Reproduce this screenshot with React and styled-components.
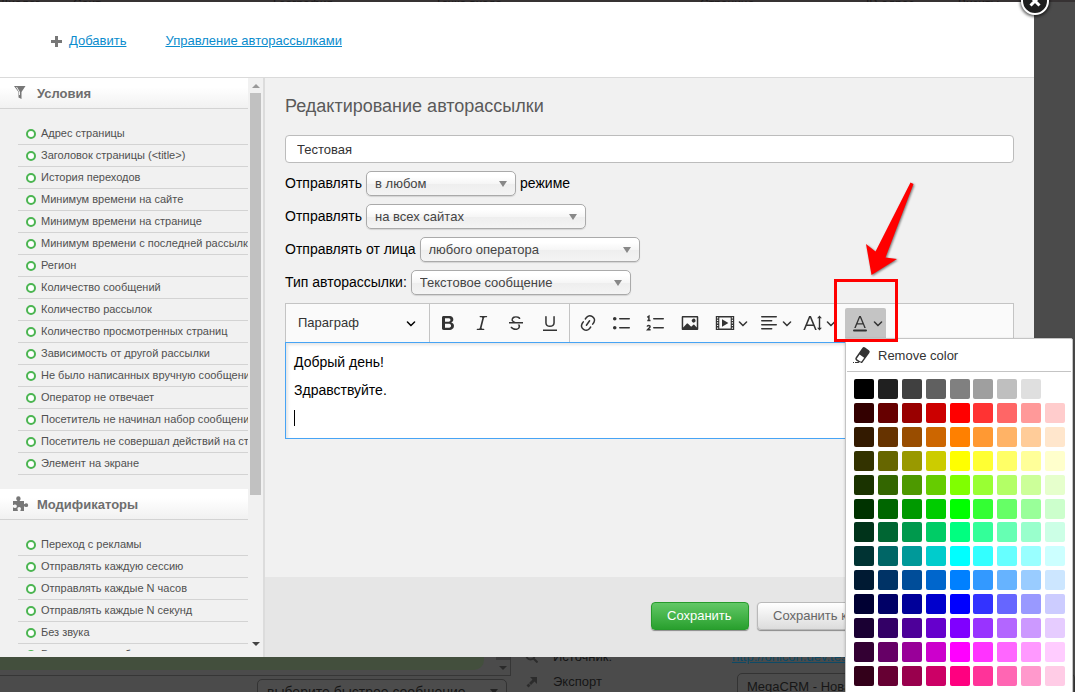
import React from "react";
import styled, { createGlobalStyle } from "styled-components";

const GlobalStyle = createGlobalStyle`
  *, *::before, *::after { box-sizing: border-box; }
  body {
    margin: 0;
    background: #4b4b4b;
    font-family: "Liberation Sans", Arial, sans-serif;
    font-size: 13px;
    color: #000;
    overflow: hidden;
  }
  button, input, select { font-family: inherit; margin: 0; }
`;

/* ---------- page behind the dialog ---------- */

const Page = styled.div`
  height: 100vh;
  display: flex;
  flex-direction: column;
  overflow: hidden;
`;

const TableHead = styled.div`
  height: 2px;
  flex: none;
  display: grid;
  grid-template-columns: 73px 200px 162px 265px 166px 92px 1fr;
  align-items: end;
  overflow: hidden;
  background: #363233;
  color: #1c1a1b;
  font-size: 12px;
  line-height: 8px;
`;

const Behind = styled.div`
  height: 35px;
  flex: none;
  display: flex;
  overflow: hidden;
  color: #161616;
`;

const Chat = styled.div`
  width: 511px;
  flex: none;
`;

const ChatLog = styled.div`
  height: 19px;
  display: flex;
  justify-content: space-between;
  border: solid #363636;
  border-width: 0 1px 1px 0;
`;

const ChatBubble = styled.div`
  width: 484px;
  height: 13px;
  background: #434f3d;
  border-radius: 0 0 10px 0;
`;

const ChatScroll = styled.div`
  width: 14px;
  border-top: 3px solid #3b3b3b;
  display: flex;
  align-items: center;
  justify-content: center;
`;

const QuickWrap = styled.div`
  position: relative;
  padding: 3px 4px 0 257px;
`;

const QuickArrow = styled.span`
  position: absolute;
  top: 13px;
  right: 13px;
  border: 4px solid transparent;
  border-top: 5px solid #222;
  border-bottom: 0;
  pointer-events: none;
`;

const Details = styled.div`
  width: 207px;
  flex: none;
  padding-left: 14px;
  margin-top: -13px;
`;

const DetailRow = styled.div`
  height: 25px;
  display: flex;
  align-items: center;
  gap: 15px;
`;

const Crm = styled.div`
  flex: 1;
  padding-left: 14px;
  margin-top: -8px;
`;

const CrmLink = styled.a`
  display: block;
  line-height: 16px;
  color: #0d4a66;
`;

const DimSelect = styled.select`
  appearance: none;
  display: block;
  width: 100%;
  height: 26px;
  padding: 0 12px 0 9px;
  border: 1px solid #333;
  border-radius: 5px;
  background: #4c4c4c;
  color: #161616;
  font-size: ${(p) => p.$size || 14}px;
`;

const CrmBox = styled.div`
  margin: 8px 0 0 5px;
`;

const Triangle = styled.span`
  width: 0;
  height: 0;
  border: 4px solid transparent;
  border-width: ${(p) => (p.$up ? "0 4px 4px" : "4px 4px 0")};
  border-bottom-color: ${(p) => (p.$up ? p.$color : "transparent")};
  border-top-color: ${(p) => (p.$up ? "transparent" : p.$color)};
`;

/* ---------- dialog ---------- */

const Dialog = styled.div`
  flex: 1;
  min-height: 0;
  margin-right: 41px;
  position: relative;
  display: flex;
  flex-direction: column;
  background: #fff;
`;

const CloseButton = styled.button`
  position: absolute;
  top: -15px;
  right: -15px;
  width: 28px;
  height: 28px;
  padding: 0;
  display: flex;
  align-items: center;
  justify-content: center;
  border: 2px solid #fff;
  border-radius: 50%;
  background: #1d1d1d;
  box-shadow: 0 1px 3px 1px rgba(0, 0, 0, 0.6);
`;

const DialogHeader = styled.header`
  height: 76px;
  flex: none;
  display: flex;
  align-items: center;
  gap: 39px;
  padding: 3px 51px 0;
  border-bottom: 1px solid #dadada;
`;

const HeaderLink = styled.a`
  display: flex;
  align-items: center;
  gap: 7px;
  color: #0a8ccd;
  line-height: 16px;
`;

const DialogBody = styled.div`
  flex: 1;
  min-height: 0;
  display: flex;
`;

const Sidebar = styled.aside`
  width: 265px;
  flex: none;
  display: flex;
  padding-bottom: 6px;
  background: #f1f1f1;
  border-right: 2px solid #dcdcdc;
`;

const SidebarScroll = styled.div`
  flex: 1;
  min-width: 0;
  overflow: hidden;
`;

const ScrollTrack = styled.div`
  width: 15px;
  display: flex;
  flex-direction: column;
  align-items: center;
`;

const ScrollArrow = styled.button`
  width: 15px;
  height: 15px;
  padding: 0;
  border: 0;
  background: none;
  display: flex;
  align-items: center;
  justify-content: center;
`;

const ScrollRail = styled.div`
  flex: 1;
  align-self: stretch;
  padding: 0 2px;
`;

const ScrollThumb = styled.div`
  height: 74%;
  background: #c1c1c1;
`;

const SectionTitle = styled.h2`
  height: 31px;
  margin: 0;
  display: flex;
  align-items: center;
  gap: 8px;
  padding-left: 12px;
  border-bottom: 1px solid #d3d3d3;
  background: linear-gradient(#fff 30%, #f1f1f1);
  color: #6e6e6e;
  font-size: 13px;
  font-weight: bold;
`;

const ConditionList = styled.ul`
  margin: 0;
  padding: 14px 0 14px 18px;
  list-style: none;
`;

const Condition = styled.li`
  height: 22px;
  display: flex;
  align-items: flex-start;
  gap: 5px;
  padding-left: 8px;
  border-bottom: 1px solid #d3d3d3;
  color: #505050;
  font-size: 11px;
  line-height: 20px;
  white-space: nowrap;

  &::before {
    content: "";
    width: 10px;
    height: 10px;
    margin-top: 6px;
    flex: none;
    border: 2px solid #4bb551;
    border-radius: 50%;
    background: #fff;
  }
`;

const Main = styled.main`
  flex: 1;
  min-width: 0;
  display: flex;
  flex-direction: column;
  background: #f1f1f1;
`;

const Form = styled.form`
  flex: 1;
  padding: 17px 20px 0;
  display: flex;
  flex-direction: column;
  gap: 8px;
`;

const Title = styled.h1`
  margin: 0 0 10px;
  color: #5a5a5a;
  font-size: 18px;
  line-height: 22px;
  font-weight: normal;
`;

const NameInput = styled.input`
  width: 100%;
  height: 28px;
  padding: 0 11px;
  border: 1px solid #bcbcbc;
  border-radius: 4px;
  background: #fff;
  color: #333;
  font-size: 13px;
`;

const FieldRow = styled.div`
  height: 25px;
  display: flex;
  align-items: flex-start;
  gap: 4px;
  font-size: 14px;
  line-height: 24px;
`;

const SelectWrap = styled.span`
  position: relative;
  width: ${(p) => p.$width}px;

  &::after {
    content: "";
    position: absolute;
    top: 10px;
    right: 9px;
    border: 4px solid transparent;
    border-top: 6px solid #888;
    border-bottom: 0;
    pointer-events: none;
  }
`;

const Select = styled.select`
  appearance: none;
  display: block;
  width: 100%;
  height: 25px;
  padding: 0 24px 0 8px;
  border: 1px solid #aaa;
  border-radius: 5px;
  background: linear-gradient(#fff 20%, #f6f6f6 50%, #eee 52%, #f4f4f4);
  box-shadow: 0 1px 1px rgba(0, 0, 0, 0.12);
  color: #444;
  font-size: 13px;
`;

const Editor = styled.div``;

const Toolbar = styled.div`
  height: 39px;
  display: flex;
  border: 1px solid #c4c4c4;
  border-bottom: 0;
  background: #fafafa;
`;

const ToolGroup = styled.div`
  display: flex;
  align-items: center;
  padding: 0 2px 0 1px;
  border-right: ${(p) => (p.$last ? 0 : 1)}px solid #c4c4c4;
`;

const StyleWrap = styled.div`
  position: relative;
  width: 144px;
  border-right: 1px solid #c4c4c4;

  svg {
    position: absolute;
    top: 14px;
    right: 13px;
    pointer-events: none;
  }
`;

const StyleSelect = styled.select`
  appearance: none;
  width: 100%;
  height: 38px;
  padding: 0 30px 2px 12px;
  border: 0;
  background: none;
  color: #333;
  font-size: 13px;
`;

const ToolButton = styled.button`
  width: 34px;
  height: 30px;
  padding: 0 7px;
  border: 0;
  background: none;
  color: #333;
  display: flex;
  align-items: center;
`;

const DropButton = styled(ToolButton)`
  width: 41px;
  padding: 0 3px 0 5px;
  margin-left: ${(p) => (p.$active ? 0 : 3)}px;
  gap: 3px;
  border-radius: 2px 2px 0 0;
  background: ${(p) => (p.$active ? "#c4c4c4" : "none")};
`;

const ColorDropdown = styled.div`
  position: relative;
  margin-left: 6px;
`;

const ColorPanel = styled.div`
  position: absolute;
  top: 100%;
  left: 0;
  z-index: 2;
  width: 228px;
  padding: 0 1px 7px;
  border: 1px solid #c4c4c4;
  border-radius: 0 2px 2px 2px;
  background: #fff;
  box-shadow: 0 1px 3px rgba(0, 0, 0, 0.2);
`;

const RemoveColor = styled.button`
  width: 100%;
  height: 33px;
  padding: 0 4px;
  display: flex;
  align-items: center;
  gap: 7px;
  border: 0;
  border-bottom: 1px solid #c4c4c4;
  background: none;
  color: #333;
  font-size: 13px;
`;

const ColorGrid = styled.div`
  display: grid;
  grid-template-columns: repeat(9, 20px);
  justify-content: space-between;
  align-content: space-between;
  height: 307px;
  margin: 7px 6px 0 7px;
`;

const Swatch = styled.button`
  height: 20px;
  padding: 0;
  border: 0;
  border-radius: 2px;
  background: ${(p) => p.$color};
`;

const Highlight = styled.div`
  position: absolute;
  z-index: 3;
  top: -29px;
  left: -11px;
  width: 64px;
  height: 63px;
  border: 3px solid #f00;
  pointer-events: none;

  svg {
    position: absolute;
    left: 24px;
    bottom: 65px;
    overflow: visible;
    filter: drop-shadow(1px 1px 1px rgba(0, 0, 0, 0.5));
  }
`;

const EditArea = styled.div`
  min-height: 97px;
  padding: 5px 8px;
  border: 1px solid #47a4f5;
  background: #fff;
  box-shadow: inset 2px 2px 3px rgba(0, 0, 0, 0.1);
  font-size: 14px;
  line-height: 28px;
  outline: none;

  p { margin: 0; }
`;

const Caret = styled.span`
  display: block;
  width: 1px;
  height: 16px;
  margin-top: 6px;
  background: #000;
`;

const Actions = styled.footer`
  display: flex;
  justify-content: flex-end;
  gap: 8px;
  padding: 25px 20px 27px;
  background: #e6e6e6;
`;

const ActionButton = styled.button`
  height: 28px;
  width: ${(p) => (p.$primary ? 98 : 257)}px;
  padding: 0 15px 2px;
  text-align: left;
  white-space: nowrap;
  border: 1px solid ${(p) => (p.$primary ? "#279a2c" : "#b9b9b9")};
  border-radius: 4px;
  background: ${(p) =>
    p.$primary ? "linear-gradient(#62c866, #29a02e)" : "linear-gradient(#fff, #dcdcdc)"};
  box-shadow: 0 1px 1px rgba(0, 0, 0, 0.4);
  color: ${(p) => (p.$primary ? "#fff" : "#666")};
  font-size: 13px;
`;

/* ---------- icons ---------- */

const Icon = ({ d, children, size = 20, box = 20 }) => (
  <svg width={size} height={size} viewBox={`0 0 ${box} ${box}`} fill="currentColor" aria-hidden="true">
    {d && <path d={d} />}
    {children}
  </svg>
);

const Chevron = () => (
  <Icon
    size={10}
    box={10}
    d="M.941 4.523a.75.75 0 1 1 1.06-1.06l3.006 3.005 3.005-3.005a.75.75 0 1 1 1.06 1.06l-3.549 3.55a.75.75 0 0 1-1.168-.136L.941 4.523z"
  />
);

const paths = {
  bold: "M10.187 17H5.773c-.637 0-1.092-.138-1.364-.415-.273-.277-.409-.718-.409-1.323V4.738c0-.617.14-1.062.419-1.332.279-.27.73-.406 1.354-.406h4.68c.69 0 1.288.041 1.793.124.506.083.96.242 1.36.478.341.197.644.447.906.75a3.262 3.262 0 0 1 .808 2.162c0 1.401-.722 2.426-2.167 3.075C15.05 10.175 16 11.315 16 13.01a3.756 3.756 0 0 1-2.296 3.504 6.1 6.1 0 0 1-1.517.377c-.571.073-1.238.11-2 .11zm-.217-6.217H7v4.087h3.069c1.977 0 2.965-.69 2.965-2.072 0-.707-.256-1.22-.768-1.537-.512-.319-1.277-.478-2.296-.478zM7 5.13v3.619h2.606c.729 0 1.292-.067 1.69-.2a1.6 1.6 0 0 0 .91-.765c.165-.267.247-.566.247-.897 0-.707-.26-1.176-.778-1.409-.519-.232-1.31-.348-2.375-.348H7z",
  italic: "M9.586 14.633l.021.004c-.036.335.095.655.393.962.082.083.173.15.274.201h1.474a.6.6 0 1 1 0 1.2H5.304a.6.6 0 0 1 0-1.2h1.15c.474-.07.809-.182 1.005-.334.157-.122.291-.32.404-.597l2.416-9.55a1.053 1.053 0 0 0-.281-.823 1.12 1.12 0 0 0-.442-.296H8.15a.6.6 0 0 1 0-1.2h6.443a.6.6 0 1 1 0 1.2h-1.195c-.376.056-.65.155-.823.296-.215.175-.423.439-.623.79l-2.366 9.347z",
  strike: "M7 16.4c-.8-.4-1.5-.9-2.2-1.5a.6.6 0 0 1-.2-.5l.3-.6h1c1 1.2 2.1 1.7 3.7 1.7 1 0 1.8-.3 2.3-.6.6-.4.6-1.2.6-1.3.2-1.2-.9-2.1-.9-2.1h2.1c.3.7.4 1.2.4 1.7v.8l-.6 1.2c-.6.8-1.1 1-1.6 1.2a6 6 0 0 1-2.4.6c-1 0-1.8-.3-2.5-.6zM6.8 9L6 8.300c-.4-.5-.5-.8-.5-1.6 0-.7.1-1.3.5-1.8.4-.6 1-1 1.6-1.3a6.3 6.3 0 0 1 4.7 0 4 4 0 0 1 1.7 1l.3.7c0 .1.2.4-.2.7-.4.2-.9.1-1 0a3 3 0 0 0-1.2-1c-.4-.2-1-.3-2-.4-.7 0-1.4.2-2 .6-.8.6-1 .8-1 1.5 0 .8.5 1 1.2 1.5.6.4 1.1.7 1.9 1H6.8zM3 10.5V9h14v1.5z",
  underline: "M3 18v-1.5h14V18zM5.2 10V3.6c0-.4.4-.6.8-.6.3 0 .7.2.7.6v6.2c0 2 1.3 2.8 3.2 2.8 1.9 0 3.4-.9 3.4-2.9V3.6c0-.3.4-.5.8-.5.3 0 .7.2.7.5V10c0 2.7-2.2 4-4.9 4-2.6 0-4.7-1.2-4.7-4z",
  link: "m11.077 15 .991-1.416a.75.75 0 1 1 1.229.86l-1.148 1.64a.748.748 0 0 1-.217.206 5.251 5.251 0 0 1-8.503-5.955.741.741 0 0 1 .12-.274l1.147-1.639a.75.75 0 1 1 1.228.86L4.933 10.7l.006.003a3.75 3.75 0 0 0 6.132 4.294l.006.004zm5.494-5.335a.748.748 0 0 1-.12.274l-1.147 1.639a.75.75 0 1 1-1.228-.86l.86-1.23a3.75 3.75 0 0 0-6.144-4.301l-.86 1.229a.75.75 0 0 1-1.229-.86l1.148-1.64a.748.748 0 0 1 .217-.206 5.251 5.251 0 0 1 8.503 5.955zm-4.563-2.532a.75.75 0 0 1 .184 1.045l-3.155 4.505a.75.75 0 1 1-1.229-.86l3.155-4.506a.75.75 0 0 1 1.045-.184z",
  bullets: "M7 5.75c0 .414.336.75.75.75h9.5a.75.75 0 1 0 0-1.5h-9.5a.75.75 0 0 0-.75.75zm-6 0C1 4.784 1.777 4 2.75 4c.966 0 1.75.777 1.75 1.75 0 .966-.777 1.75-1.75 1.75C1.784 7.5 1 6.723 1 5.75zm6 9c0 .414.336.75.75.75h9.5a.75.75 0 1 0 0-1.5h-9.5a.75.75 0 0 0-.75.75zm-6 0c0-.966.777-1.75 1.75-1.75.966 0 1.75.777 1.75 1.75 0 .966-.777 1.75-1.75 1.75-.966 0-1.75-.777-1.75-1.75z",
  image: "M6.91 10.54c.26-.23.64-.21.88.03l3.36 3.14 2.23-2.06a.64.64 0 0 1 .87 0l2.52 2.97V4.5H3.2v10.12l3.71-4.08zm10.27-7.51c.6 0 1.09.47 1.09 1.05v11.84c0 .59-.49 1.06-1.09 1.06H2.79c-.6 0-1.09-.47-1.09-1.06V4.08c0-.58.49-1.05 1.1-1.05h14.38zm-5.22 5.56a1.96 1.96 0 1 1 3.4-1.96 1.96 1.96 0 0 1-3.4 1.96z",
  align: "M2 3.75c0 .414.336.75.75.75h14.5a.75.75 0 1 0 0-1.5H2.75a.75.75 0 0 0-.75.75zm0 8c0 .414.336.75.75.75h14.5a.75.75 0 1 0 0-1.5H2.75a.75.75 0 0 0-.75.75zm0 4c0 .414.336.75.75.75h9.929a.75.75 0 1 0 0-1.5H2.75a.75.75 0 0 0-.75.75zm0-8c0 .414.336.75.75.75h9.929a.75.75 0 1 0 0-1.5H2.75a.75.75 0 0 0-.75.75z",
  fontSize: "M9.816 11.5L7.038 4.785 4.261 11.5h5.555zm.62 1.5H3.641l-1.666 4.028H.312l5.789-14h1.875l5.789 14h-1.663L10.436 13zM17.200 5.200v9.600h1.700l-2.400 2.800-2.400-2.800h1.700V5.200h-1.700l2.400-2.800 2.400 2.800z",
  fontColor: "M12.4 10.3L10 4.5l-2.4 5.8h4.8zm.5 1.2H7.1L5.7 15H4.2l5-12h1.6l5 12h-1.5L13 11.5zm3.1 7H4a1 1 0 0 1 0-2h12a1 1 0 0 1 0 2z",
  eraser: "M8.636 9.531l-2.758 3.94a.5.5 0 0 0 .122.696l3.224 2.284h1.314l2.636-3.736L8.636 9.53zm.288 8.451L5.14 15.396a2 2 0 0 1-.491-2.786l6.673-9.53a2 2 0 0 1 2.785-.49l3.742 2.62a2 2 0 0 1 .491 2.785l-7.269 10.053-2.147-.066zM4 18h5.523v-1H4zm-2 0h1v-1H2z",
};

const NumberedIcon = () => (
  <Icon d="M7 5.75c0 .414.336.75.75.75h9.5a.75.75 0 1 0 0-1.5h-9.5a.75.75 0 0 0-.75.75zm0 9c0 .414.336.75.75.75h9.5a.75.75 0 1 0 0-1.5h-9.5a.75.75 0 0 0-.75.75z">
    <g fill="none" stroke="currentColor" strokeWidth="1.5">
      <path d="M1.300 4.400L2.900 3.300V7.800M1.300 7.600H4.500" />
      <path d="M1.200 13.600c.2-1.600 3-1.500 2.800.2-.1 1-1.400 1.700-2.400 2.900H4.600" />
    </g>
  </Icon>
);

const MediaIcon = () => (
  <Icon>
    <path
      fillRule="evenodd"
      d="M.8 3h18.400v14H.8zM4.300 4.500v11h11.400v-11zM2 4.200v1.200h1.200V4.200zm0 2.500v1.200h1.200V6.700zm0 2.600v1.200h1.200V9.300zm0 2.600v1.200h1.200v-1.200zm0 2.600v1.200h1.200v-1.200zM16.800 4.200v1.200H18V4.200zm0 2.500v1.200H18V6.700zm0 2.600v1.200H18V9.300zm0 2.600v1.200H18v-1.200zm0 2.600v1.200H18v-1.200z"
    />
    <path d="M7 6.300l6.400 3.700L7 13.700z" />
  </Icon>
);

const PlusIcon = () => (
  <svg width="11" height="11" viewBox="0 0 11 11" fill="#777" aria-hidden="true">
    <path d="M4 0h3v4h4v3H7v4H4V7H0V4h4z" />
  </svg>
);

const FunnelIcon = () => (
  <svg width="17" height="18" viewBox="0 0 17 18" aria-hidden="true">
    <path d="M2 2h11.500L9.500 8v7L6.500 13.500V8z" fill="#777" />
    <path d="M4.500 3l3 5v3" fill="none" stroke="#eee" />
  </svg>
);

const PuzzleIcon = () => (
  <svg width="17" height="16" viewBox="0 0 17 16" fill="#777" aria-hidden="true">
    <path d="M1 5h4.500C4.900 4 4.200 3.600 4.200 2.400a2.200 2.200 0 0 1 4.400 0C8.600 3.600 8 4 7.500 5H12v3.200c1-.2 1.300-.9 2.300-.9a1.900 1.900 0 0 1 0 3.800c-1 0-1.400-.8-2.300-.9V15H8.400c0-1 .6-1.300.6-2.200a1.800 1.800 0 0 0-3.600 0c0 .9.500 1.200.5 2.200H1v-3.600c1 0 1.300.5 2.200.5a1.700 1.700 0 0 0 0-3.400c-.9 0-1.200.5-2.200.5z" />
  </svg>
);

/* ---------- data ---------- */

const conditions = [
  "Адрес страницы",
  "Заголовок страницы (<title>)",
  "История переходов",
  "Минимум времени на сайте",
  "Минимум времени на странице",
  "Минимум времени с последней рассылки",
  "Регион",
  "Количество сообщений",
  "Количество рассылок",
  "Количество просмотренных страниц",
  "Зависимость от другой рассылки",
  "Не было написанных вручную сообщений",
  "Оператор не отвечает",
  "Посетитель не начинал набор сообщения",
  "Посетитель не совершал действий на странице",
  "Элемент на экране",
];

const modifiers = [
  "Переход с рекламы",
  "Отправлять каждую сессию",
  "Отправлять каждые N часов",
  "Отправлять каждые N секунд",
  "Без звука",
  "Выключено для бота",
];

const fields = [
  { id: "mode", label: "Отправлять", value: "в любом", width: 150, after: "режиме" },
  { id: "sites", label: "Отправлять", value: "на всех сайтах", width: 220 },
  { id: "sender", label: "Отправлять от лица", value: "любого оператора", width: 220 },
  { id: "kind", label: "Тип авторассылки:", value: "Текстовое сообщение", width: 220 },
];

const grays = ["#000", "#202020", "#404040", "#606060", "#808080", "#9f9f9f", "#bfbfbf", "#dfdfdf", "#fff"];
const hues = Array.from({ length: 12 }, (_, i) => i * 30);
const lightness = [10, 20, 30, 40, 50, 60, 70, 80, 90];
const colors = grays.concat(hues.flatMap((h) => lightness.map((l) => `hsl(${h}, 100%, ${l}%)`)));

const Section = ({ icon, title, items }) => (
  <section>
    <SectionTitle>
      {icon}
      {title}
    </SectionTitle>
    <ConditionList>
      {items.map((text) => (
        <Condition key={text}>{text}</Condition>
      ))}
    </ConditionList>
  </section>
);

export default function App() {
  return (
    <Page>
      <GlobalStyle />
      <TableHead>
        <span>Диалог</span>
        <span>Сайт</span>
        <span>География</span>
        <span>Точка входа</span>
        <span>Страница</span>
        <span>IP-адрес</span>
        <span>Визиты</span>
      </TableHead>

      <Dialog role="dialog" aria-label="Редактирование авторассылки">
        <DialogHeader>
          <HeaderLink href="#add">
            <PlusIcon />
            Добавить
          </HeaderLink>
          <HeaderLink href="#manage">Управление авторассылками</HeaderLink>
        </DialogHeader>

        <DialogBody>
          <Sidebar>
            <SidebarScroll>
              <Section icon={<FunnelIcon />} title="Условия" items={conditions} />
              <Section icon={<PuzzleIcon />} title="Модификаторы" items={modifiers} />
            </SidebarScroll>
            <ScrollTrack>
              <ScrollArrow type="button" aria-label="Вверх">
                <Triangle $up $color="#999" />
              </ScrollArrow>
              <ScrollRail>
                <ScrollThumb />
              </ScrollRail>
              <ScrollArrow type="button" aria-label="Вниз">
                <Triangle $color="#444" />
              </ScrollArrow>
            </ScrollTrack>
          </Sidebar>

          <Main>
            <Form>
              <Title>Редактирование авторассылки</Title>
              <NameInput aria-label="Название" defaultValue="Тестовая" />
              {fields.map((f) => (
                <FieldRow key={f.id}>
                  <label htmlFor={f.id}>{f.label}</label>
                  <SelectWrap $width={f.width}>
                    <Select id={f.id}>
                      <option>{f.value}</option>
                    </Select>
                  </SelectWrap>
                  {f.after && <span>{f.after}</span>}
                </FieldRow>
              ))}

              <Editor>
                <Toolbar role="toolbar">
                  <StyleWrap>
                    <StyleSelect aria-label="Стиль">
                      <option>Параграф</option>
                    </StyleSelect>
                    <Chevron />
                  </StyleWrap>
                  <ToolGroup>
                    <ToolButton type="button" aria-label="Жирный"><Icon d={paths.bold} /></ToolButton>
                    <ToolButton type="button" aria-label="Курсив"><Icon d={paths.italic} /></ToolButton>
                    <ToolButton type="button" aria-label="Зачёркнутый"><Icon d={paths.strike} /></ToolButton>
                    <ToolButton type="button" aria-label="Подчёркнутый"><Icon d={paths.underline} /></ToolButton>
                  </ToolGroup>
                  <ToolGroup $last>
                    <ToolButton type="button" aria-label="Ссылка"><Icon d={paths.link} /></ToolButton>
                    <ToolButton type="button" aria-label="Маркированный список"><Icon d={paths.bullets} /></ToolButton>
                    <ToolButton type="button" aria-label="Нумерованный список"><NumberedIcon /></ToolButton>
                    <ToolButton type="button" aria-label="Изображение"><Icon d={paths.image} /></ToolButton>
                    <DropButton type="button" aria-label="Медиа"><MediaIcon /><Chevron /></DropButton>
                    <DropButton type="button" aria-label="Выравнивание"><Icon d={paths.align} /><Chevron /></DropButton>
                    <DropButton type="button" aria-label="Размер шрифта"><Icon d={paths.fontSize} /><Chevron /></DropButton>
                    <ColorDropdown>
                      <DropButton type="button" $active aria-label="Цвет шрифта" aria-expanded="true">
                        <Icon d={paths.fontColor} />
                        <Chevron />
                      </DropButton>
                      <ColorPanel>
                        <RemoveColor type="button">
                          <Icon d={paths.eraser} />
                          Remove color
                        </RemoveColor>
                        <ColorGrid>
                          {colors.map((c) => (
                            <Swatch key={c} type="button" $color={c} aria-label={c} />
                          ))}
                        </ColorGrid>
                      </ColorPanel>
                      <Highlight>
                        <svg width="50" height="92" viewBox="0 0 50 92" aria-hidden="true">
                          <path d="M49.500 0.500l3 1.500-28 73.500 11.500 1.500-25.500 16L5 62l9.500 7.500z" fill="#f00" />
                        </svg>
                      </Highlight>
                    </ColorDropdown>
                  </ToolGroup>
                </Toolbar>
                <EditArea contentEditable suppressContentEditableWarning role="textbox" aria-label="Текст сообщения">
                  <p>Добрый день!</p>
                  <p>Здравствуйте.</p>
                  <Caret />
                </EditArea>
              </Editor>
            </Form>

            <Actions>
              <ActionButton type="button" $primary>Сохранить</ActionButton>
              <ActionButton type="button">Сохранить как</ActionButton>
            </Actions>
          </Main>
        </DialogBody>

        <CloseButton type="button" aria-label="Закрыть">
          <svg width="12" height="12" viewBox="0 0 12 12" stroke="#fff" strokeWidth="3" aria-hidden="true">
            <path d="M1.500 1.500l9 9M10.500 1.500l-9 9" />
          </svg>
        </CloseButton>
      </Dialog>

      <Behind>
        <Chat>
          <ChatLog>
            <ChatBubble />
            <ChatScroll>
              <Triangle $color="#2a2a2a" />
            </ChatScroll>
          </ChatLog>
          <QuickWrap>
            <DimSelect aria-label="Быстрое сообщение">
              <option>выберите быстрое сообщение</option>
            </DimSelect>
            <QuickArrow />
          </QuickWrap>
        </Chat>
        <Details>
          <DetailRow>
            <svg width="13" height="13" viewBox="0 0 13 13" fill="none" stroke="#2c2c2c" strokeWidth="2" aria-hidden="true">
              <circle cx="5.500" cy="5.500" r="4" />
              <path d="M8.500 8.500l4 4" />
            </svg>
            Источник:
          </DetailRow>
          <DetailRow>
            <svg width="13" height="13" viewBox="0 0 13 13" fill="#2c2c2c" aria-hidden="true">
              <path d="M5 2h7v7L9.500 6.500 6 10 4 8l3.500-3.500zM3.500 8.500l2 2-2 2-2-2z" />
            </svg>
            Экспорт
          </DetailRow>
        </Details>
        <Crm>
          <CrmLink href="#source">http://onicon.dev.test/?flow</CrmLink>
          <CrmBox>
            <DimSelect aria-label="CRM" $size={13}>
              <option>MegaCRM - Новая сделка</option>
            </DimSelect>
          </CrmBox>
        </Crm>
      </Behind>
    </Page>
  );
}
